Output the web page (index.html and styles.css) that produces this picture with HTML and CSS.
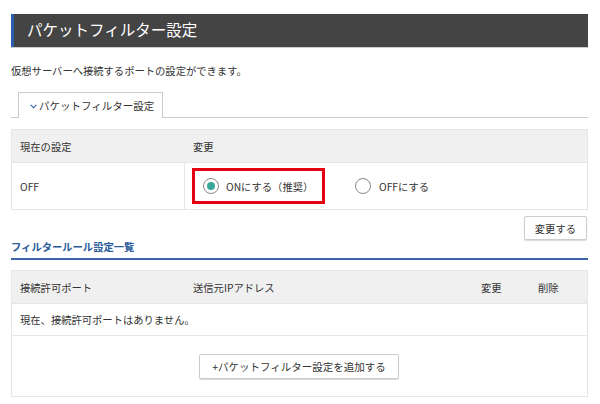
FILE: index.html
```html
<!DOCTYPE html>
<html lang="ja">
<head>
<meta charset="utf-8">
<link rel="stylesheet" href="styles.css">
</head>
<body>
<div class="page">
  <h1 class="title">パケットフィルター設定</h1>
  <p class="desc">仮想サーバーへ接続するポートの設定ができます。</p>
  <div class="tabs">
    <div class="tab"><svg class="chev" width="7" height="5" viewBox="0 0 7 5"><path d="M0.7 0.8 L3.5 3.8 L6.3 0.8" fill="none" stroke="#2b5c9e" stroke-width="1.1"/></svg>パケットフィルター設定</div>
  </div>
  <div class="table t1">
    <div class="row head">
      <div class="cell c1">現在の設定</div>
      <div class="cell c2">変更</div>
    </div>
    <div class="row body">
      <div class="cell c1">OFF</div>
      <div class="cell c2 radios">
        <div class="hl">
          <span class="radio on"></span><span>ONにする（推奨）</span>
        </div>
        <div class="opt">
          <span class="radio"></span><span>OFFにする</span>
        </div>
      </div>
    </div>
  </div>
  <div class="actions"><button class="btn">変更する</button></div>
  <h2 class="sub">フィルタールール設定一覧</h2>
  <div class="table t2">
    <div class="row head">
      <div class="cell">接続許可ポート</div>
      <div class="cell">送信元IPアドレス</div>
      <div class="cell">変更</div>
      <div class="cell">削除</div>
    </div>
    <div class="row empty">
      <div class="cell">現在、接続許可ポートはありません。</div>
    </div>
    <div class="row add">
      <button class="btn addbtn">+パケットフィルター設定を追加する</button>
    </div>
  </div>
</div>
</body>
</html>
```
FILE: styles.css
```css
* { box-sizing: border-box; }
html, body { margin: 0; padding: 0; background: #fff; }
body {
  font-family: "Noto Sans CJK JP", "Noto Sans", sans-serif;
  color: #333;
  font-size: 10.3px;
}
.page {
  width: 577px;
  margin-left: 11px;
  padding-top: 14px;
}
.title {
  margin: 0;
  height: 33px;
  background: #444;
  border-left: 3px solid #2b5fae;
  color: #fff;
  font-weight: normal;
  font-size: 15.5px;
  line-height: 31px;
  padding-left: 13px;
  box-shadow: 0 1px 0 #ccc;
}
.desc {
  margin: 0;
  padding-top: 17px;
  height: 45px;
  line-height: 14px;
}
.tabs {
  height: 26px;
  border-bottom: 1px solid #ccc;
  padding-left: 7px;
  display: flex;
  align-items: flex-end;
}
.tab {
  width: 145px;
  height: 26px;
  border: 1px solid #ccc;
  border-bottom: none;
  background: #fff;
  margin-bottom: -1px;
  display: flex;
  align-items: center;
  padding-left: 11px;
  font-size: 10.5px;
}
.chev { margin-right: 2px; margin-top: 1px; }
.table {
  border: 1px solid #e6e6e6;
  margin-top: 11px;
}
.row { display: flex; }
.row.head {
  background: #f0f0f0;
  height: 32px;
  align-items: center;
}
.row + .row { border-top: 1px solid #e6e6e6; }
.cell { padding-left: 8px; }
.t1 .c1 { width: 173px; }
.t1 .row.body { height: 47px; }
.t1 .row.body .cell { display: flex; align-items: center; }
.t1 .row.body .c1 { border-right: 1px solid #e6e6e6; }
.radios { padding-left: 7px; gap: 30px; }
.hl {
  border: 3px solid #e60012;
  width: 133px;
  height: 36px;
  display: flex;
  align-items: center;
  padding-left: 8px;
  gap: 7px;
}
.opt { display: flex; align-items: center; gap: 8px; }
.radio {
  width: 16px;
  height: 16px;
  border: 1px solid #888;
  border-radius: 50%;
  display: inline-flex;
  align-items: center;
  justify-content: center;
  background: #fff;
}
.radio.on::after {
  content: "";
  width: 8px;
  height: 8px;
  border-radius: 50%;
  background: #3aa99b;
}
.actions {
  display: flex;
  justify-content: flex-end;
  padding-top: 6px;
  padding-right: 1px;
}
.btn {
  font-family: inherit;
  font-size: 10.3px;
  color: #333;
  background: #fff;
  border: 1px solid #ccc;
  border-radius: 2px;
  box-shadow: 0 1px 1px rgba(0,0,0,0.15);
  height: 24px;
  padding: 0 10px;
  cursor: pointer;
}
.sub {
  margin: 0;
  margin-top: 0;
  font-size: 10.3px;
  color: #2a5a9a;
  font-weight: bold;
  height: 20px;
  line-height: 14px;
  border-bottom: 2px solid #3c64a8;
}
.t2 { margin-top: 10px; }
.t2 .row.head .cell:nth-child(1) { width: 173px; }
.t2 .row.head .cell:nth-child(2) { width: 288px; }
.t2 .row.head .cell:nth-child(3) { width: 57px; }
.t2 .row.empty { height: 32px; align-items: center; }
.t2 .row.add {
  height: 61px;
  justify-content: center;
  align-items: center;
  padding-right: 1px;
}
.addbtn { width: 200px; height: 25px; font-size: 10.5px; }
```
